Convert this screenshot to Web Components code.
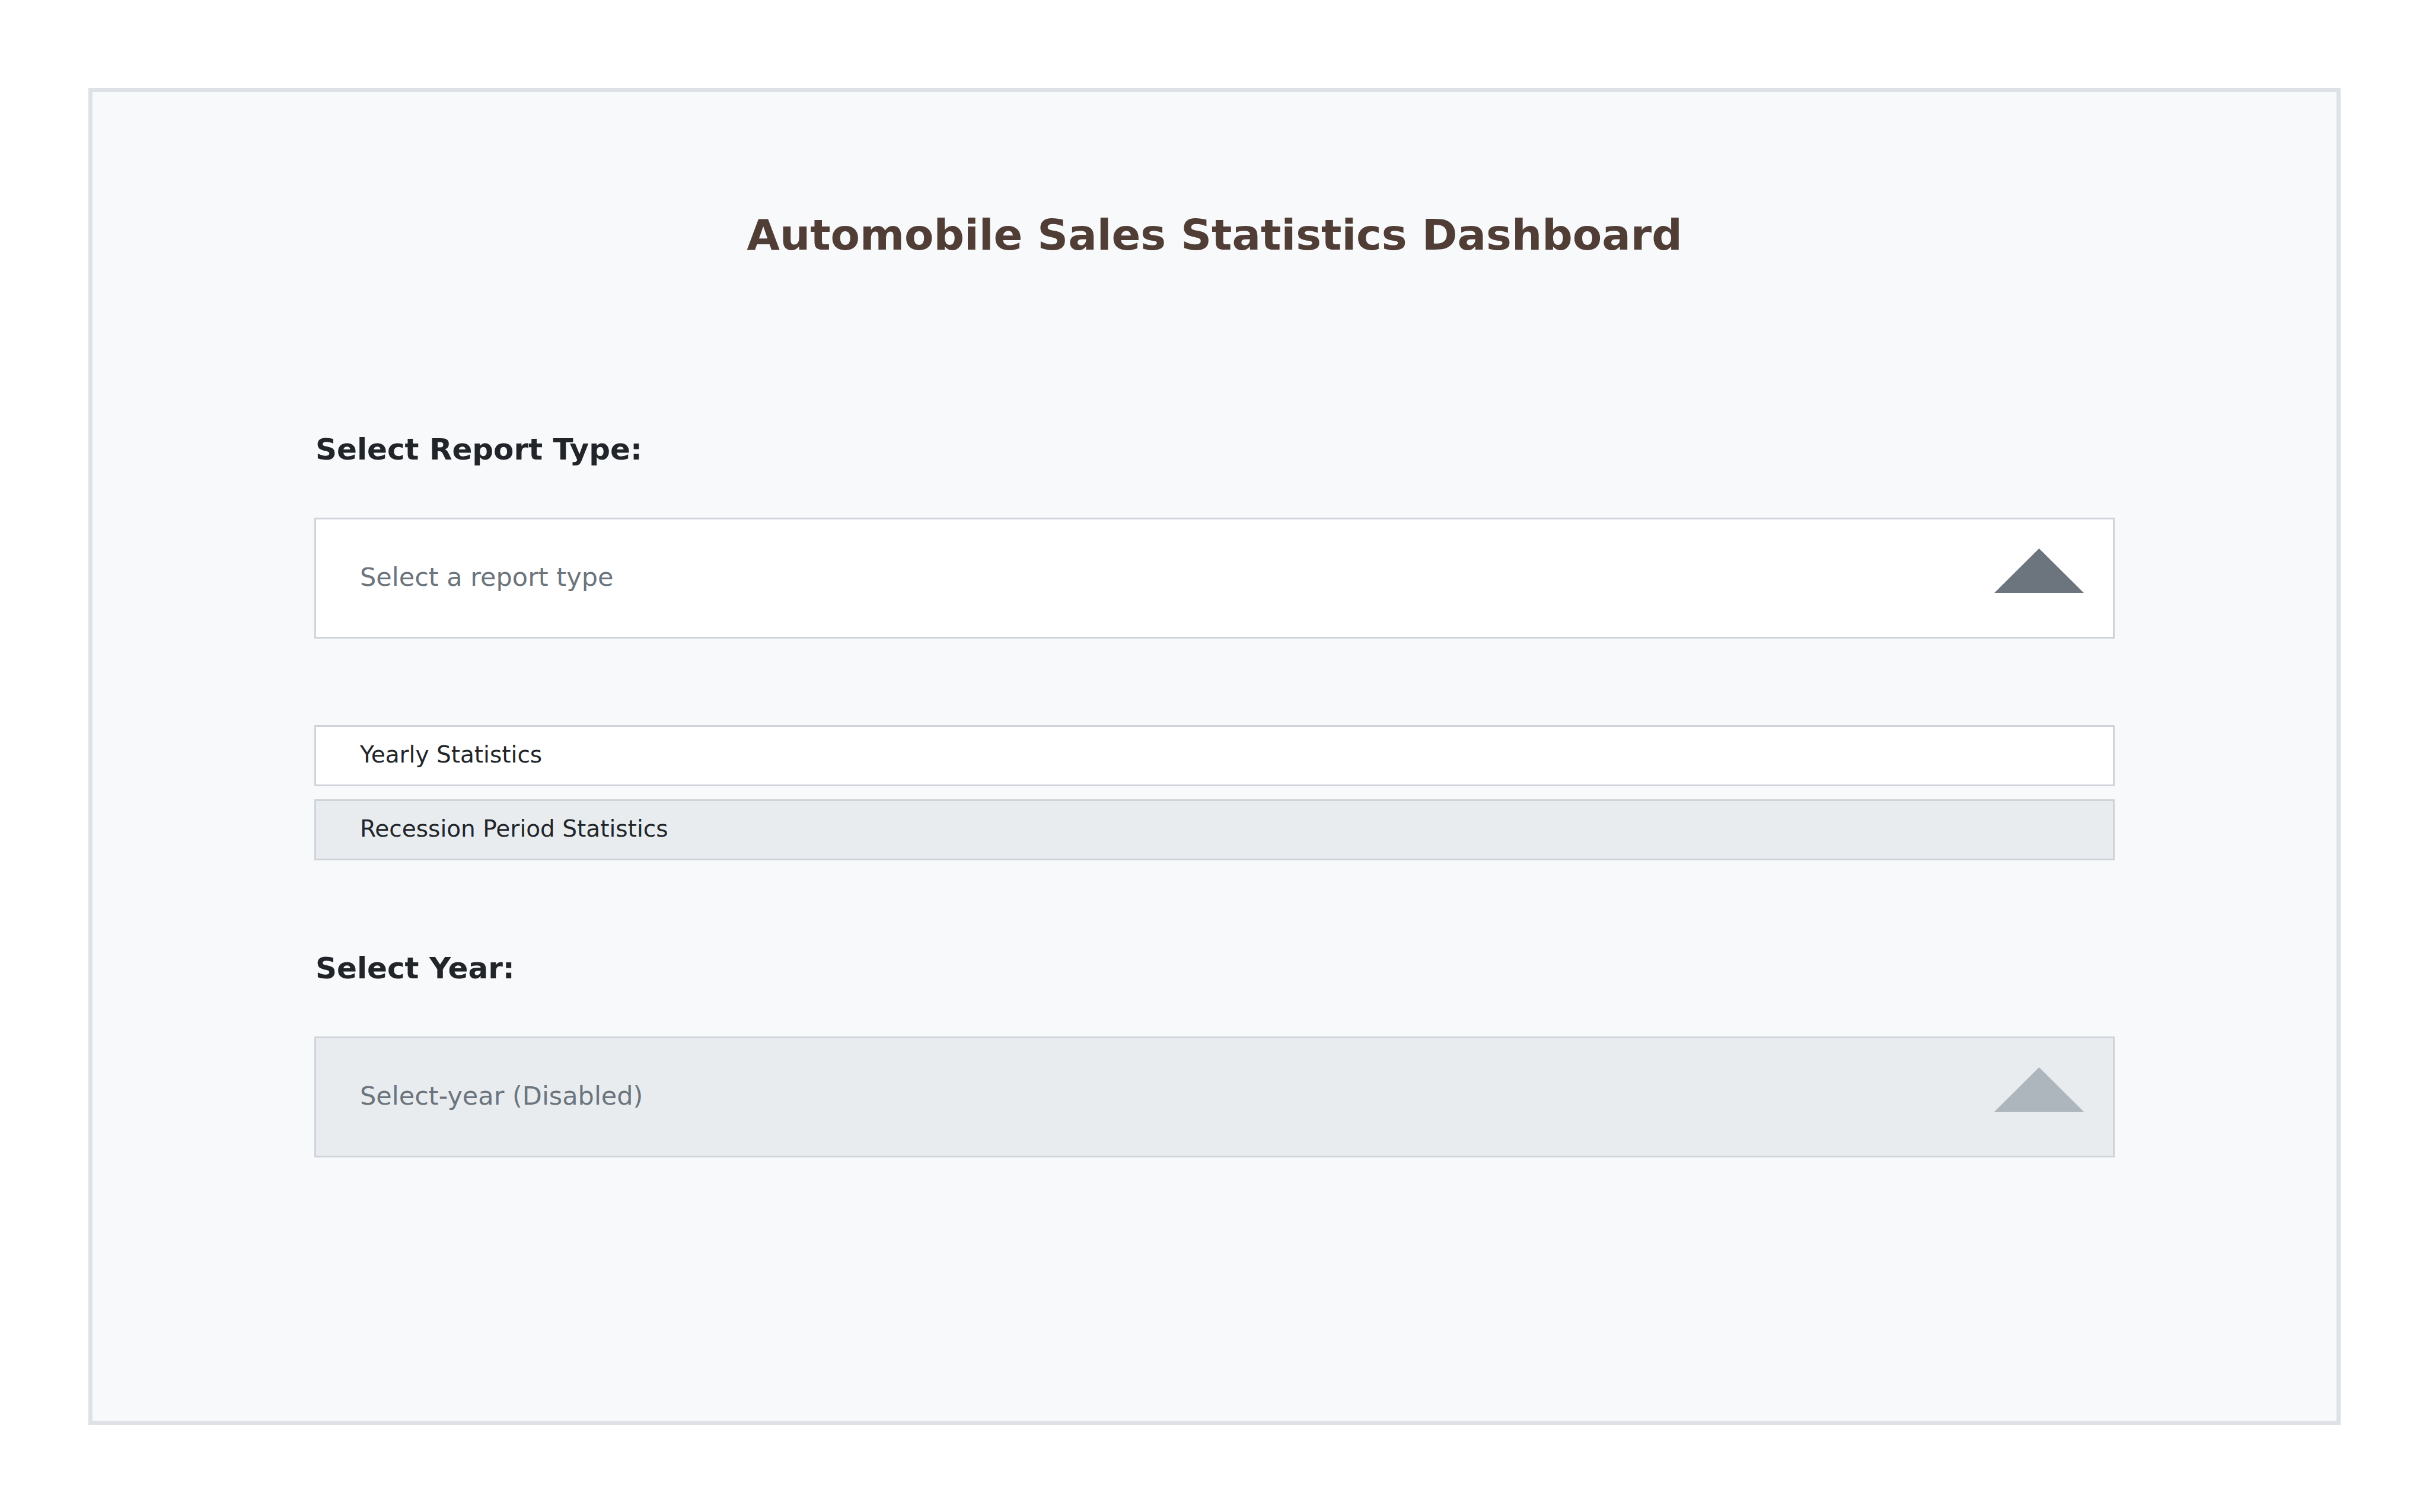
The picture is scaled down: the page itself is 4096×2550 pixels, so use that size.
<!DOCTYPE html>
<html lang="en">
<head>
<meta charset="utf-8">
<title>Automobile Sales Statistics Dashboard</title>
<style>
  html, body { margin: 0; }
  body {
    background: #ffffff;
    color: #212529;
    font-family: "DejaVu Sans", sans-serif;
  }
</style>
</head>
<body>
<sales-dashboard>
  <span slot="title">Automobile Sales Statistics Dashboard</span>
  <select-field label="Select Report Type:" placeholder="Select a report type" choices="Yearly Statistics|Recession Period Statistics"></select-field>
  <option-list label="Report types">
    <option-row>Yearly Statistics</option-row>
    <option-row selected>Recession Period Statistics</option-row>
  </option-list>
  <select-field label="Select Year:" placeholder="Select-year (Disabled)" disabled></select-field>
</sales-dashboard>

<script>
  class SalesDashboard extends HTMLElement {
    constructor() {
      super();
      this.attachShadow({ mode: "open" }).innerHTML = `
        <style>
          :host {
            display: flex;
            box-sizing: border-box;
            min-height: 100vh;
            padding: 148px 149px 147px;
          }
          main {
            flex: 1;
            box-sizing: border-box;
            padding: 199px 374px;
            border: 7px solid #dee2e6;
            background: #f8f9fa;
          }
          h1 {
            margin: 0 0 290px;
            color: #503d36;
            font-size: 72px;
            font-weight: bold;
            line-height: 84px;
            text-align: center;
          }
        </style>
        <main>
          <h1><slot name="title"></slot></h1>
          <slot></slot>
        </main>`;
    }
  }

  class SelectField extends HTMLElement {
    connectedCallback() {
      if (this.shadowRoot) return;
      this.attachShadow({ mode: "open" }).innerHTML = `
        <style>
          :host {
            display: flex;
            flex-direction: column;
            gap: 85px;
            --arrow: #6c757d;
            --fill: #ffffff;
          }
          :host([disabled]) {
            --arrow: #adb5bd;
            --fill: #e9ecef;
          }
          label {
            padding-left: 2px;
            font-size: 50px;
            font-weight: bold;
            line-height: 60px;
          }
          .control {
            display: grid;
            grid-template-columns: 1fr auto;
          }
          select {
            grid-area: 1 / 1 / 2 / 3;
            appearance: none;
            box-sizing: border-box;
            width: 100%;
            height: 204px;
            margin: 0;
            padding: 0 250px 4px 74px;
            border: 3px solid #ced4da;
            border-radius: 0;
            background: var(--fill);
            color: #6c757d;
            font: inherit;
            font-size: 43px;
            opacity: 1;
          }
          svg {
            grid-area: 1 / 2;
            width: 151px;
            height: 75px;
            margin: 52px 52px 0 0;
            fill: var(--arrow);
            pointer-events: none;
            z-index: 1;
          }
        </style>
        <label for="field"></label>
        <div class="control">
          <select id="field"></select>
          <svg viewBox="0 0 151 75" aria-hidden="true"><path d="M75.5 0L151 75H0Z"/></svg>
        </div>`;
      const select = this.shadowRoot.querySelector("select");
      this.shadowRoot.querySelector("label").textContent = this.getAttribute("label");
      select.add(new Option(this.getAttribute("placeholder"), ""));
      for (const choice of (this.getAttribute("choices") || "").split("|")) {
        if (choice) select.add(new Option(choice));
      }
      select.disabled = this.hasAttribute("disabled");
    }
  }

  class OptionList extends HTMLElement {
    constructor() {
      super();
      this.attachShadow({ mode: "open" }).innerHTML = `
        <style>
          :host { display: block; margin: 146px 0 152px; }
          div { display: flex; flex-direction: column; gap: 22px; }
        </style>
        <div role="group"><slot></slot></div>`;
    }
    connectedCallback() {
      this.shadowRoot.querySelector("div").setAttribute("aria-label", this.getAttribute("label"));
    }
  }

  class OptionRow extends HTMLElement {
    constructor() {
      super();
      this.attachShadow({ mode: "open" }).innerHTML = `
        <style>
          :host { display: block; --fill: #ffffff; }
          :host([selected]) { --fill: #e9ecef; }
          button {
            display: block;
            box-sizing: border-box;
            width: 100%;
            height: 103px;
            margin: 0;
            padding: 0 74px 4px;
            border: 3px solid #ced4da;
            border-radius: 0;
            background: var(--fill);
            color: #212529;
            font: inherit;
            font-size: 39px;
            text-align: left;
          }
        </style>
        <button type="button"><slot></slot></button>`;
    }
    connectedCallback() {
      this.shadowRoot.querySelector("button").setAttribute("aria-pressed", this.hasAttribute("selected"));
    }
  }

  customElements.define("sales-dashboard", SalesDashboard);
  customElements.define("select-field", SelectField);
  customElements.define("option-list", OptionList);
  customElements.define("option-row", OptionRow);
</script>
</body>
</html>
